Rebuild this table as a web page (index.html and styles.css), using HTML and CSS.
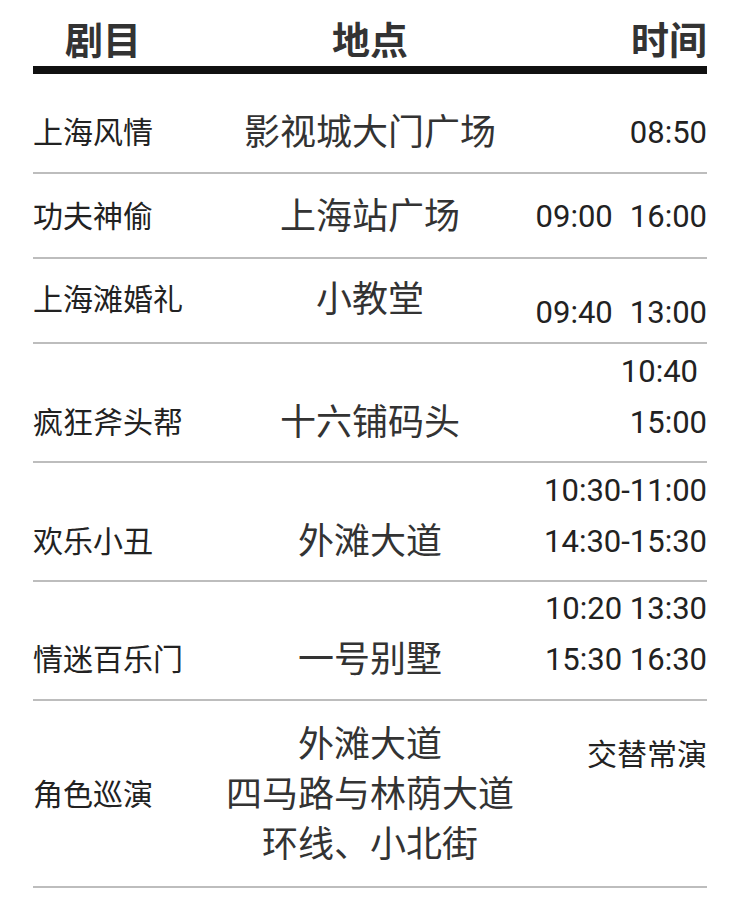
FILE: index.html
```html
<!DOCTYPE html>
<html lang="zh-CN">
<head>
<meta charset="utf-8">
<title>演出时间表</title>
<link rel="stylesheet" href="styles.css">
</head>
<body>
<div class="schedule">
  <div class="row head">
    <div class="c-name">剧目</div>
    <div class="c-loc">地点</div>
    <div class="c-time">时间</div>
  </div>

  <div class="row r1">
    <div class="c-name">上海风情</div>
    <div class="c-loc">影视城大门广场</div>
    <div class="c-time">08:50</div>
  </div>

  <div class="row r2">
    <div class="c-name">功夫神偷</div>
    <div class="c-loc">上海站广场</div>
    <div class="c-time">09:00<span class="gap"></span>16:00</div>
  </div>

  <div class="row r3">
    <div class="c-name">上海滩婚礼</div>
    <div class="c-loc">小教堂</div>
    <div class="c-time t-low">09:40<span class="gap"></span>13:00</div>
  </div>

  <div class="row r4">
    <div class="c-name">疯狂斧头帮</div>
    <div class="c-loc">十六铺码头</div>
    <div class="c-time multi"><div class="pad-r">10:40</div><div>15:00</div></div>
  </div>

  <div class="row r5">
    <div class="c-name">欢乐小丑</div>
    <div class="c-loc">外滩大道</div>
    <div class="c-time multi"><div>10:30-11:00</div><div>14:30-15:30</div></div>
  </div>

  <div class="row r6">
    <div class="c-name">情迷百乐门</div>
    <div class="c-loc">一号别墅</div>
    <div class="c-time multi"><div>10:20 13:30</div><div>15:30 16:30</div></div>
  </div>

  <div class="row r7">
    <div class="c-name mid">角色巡演</div>
    <div class="c-loc"><div>外滩大道</div><div>四马路与林荫大道</div><div>环线、小北街</div></div>
    <div class="c-time top cjk">交替常演</div>
  </div>
</div>
</body>
</html>
```

FILE: styles.css
```css
html, body {
  margin: 0;
  padding: 0;
  background: #ffffff;
}

body {
  font-family: Roboto, "Noto Sans CJK SC", sans-serif;
  color: #222222;
}

.schedule {
  width: 674px;
  margin: 0 33px;
}

.row {
  display: grid;
  grid-template-columns: minmax(0, 1fr) auto minmax(0, 1fr);
  align-items: end;
  border-bottom: 2px solid #bdbdbd;
}

.c-name {
  font-size: 30px;
  line-height: 50px;
  white-space: nowrap;
  text-align: left;
}

.c-loc {
  font-size: 36px;
  line-height: 50px;
  color: #333333;
  text-align: center;
  white-space: nowrap;
}

.c-time {
  font-size: 31px;
  line-height: 50px;
  text-align: right;
  white-space: nowrap;
}

.gap {
  display: inline-block;
  width: 17px;
}

.head {
  padding: 13px 0 3px;
  border-bottom: 8px solid #111111;
  font-family: "Noto Sans CJK SC", sans-serif;
}

.head .c-name,
.head .c-loc,
.head .c-time {
  font-size: 38px;
  font-weight: 700;
  color: #333333;
}

.head .c-name {
  padding-left: 32px;
}

.r1 { padding: 34px 0 14px; }
.r2 { padding: 18px 0 15px; }

.r3 {
  padding: 16px 0 4px;
  align-items: start;
}
.t-low { margin-top: 13px; }

.multi { line-height: 51px; }
.pad-r { padding-right: 9px; }

.r4 { padding: 2px 0 13px; }
.r5 { padding: 2px 0 13px; }
.r6 { padding: 1px 0 14px; }

.r7 { padding: 19px 0 16px; }
.mid { align-self: center; }
.top { align-self: start; margin-top: 7px; }
.cjk { font-family: "Noto Sans CJK SC", sans-serif; font-size: 30px; }
```
